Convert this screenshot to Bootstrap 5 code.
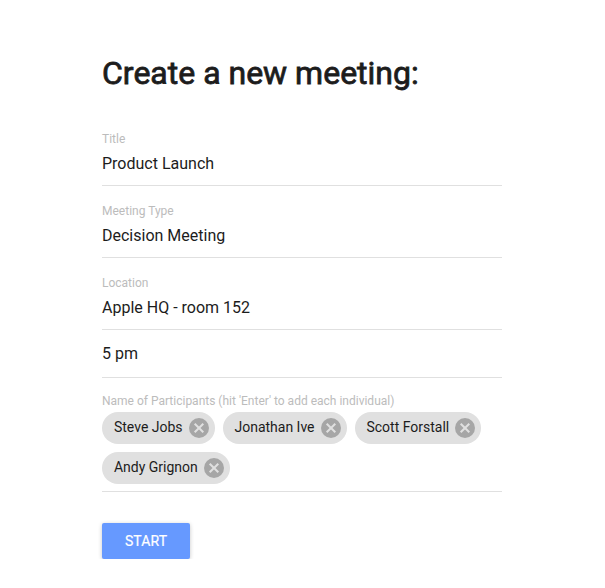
<!DOCTYPE html>
<html lang="en">
<head>
<meta charset="utf-8">
<meta name="viewport" content="width=device-width, initial-scale=1">
<title>Create a new meeting</title>
<link href="https://cdn.jsdelivr.net/npm/bootstrap@5.3.0/dist/css/bootstrap.min.css" rel="stylesheet">
<style>
body{font-family:Roboto,sans-serif;color:#1c1c1c;background:#fff}
.meeting-form{width:400px;margin-left:102px;padding-top:53px}
.page-title{font-size:32px;line-height:40px;font-weight:400;-webkit-text-stroke:.8px #1c1c1c;margin-bottom:38px;color:#1c1c1c}
.field{border-bottom:1px solid #e0e0e0;height:55px;margin-bottom:17px}
.field-time{height:48px;margin-bottom:15px}
.field-label{font-size:12px;line-height:16px;color:#bcbcbc}
.field-value{font-size:16px;line-height:24px;padding-top:5px}
.field-location{margin-bottom:0}
.field-time .field-value{padding-top:12px}
.field-chips{border-bottom:1px solid #e0e0e0;height:99px;margin-bottom:31px}
.chip-item{height:32px;border-radius:16px;background:#e0e0e0;font-size:14px;letter-spacing:-.01px;padding:0 6px 0 12px;gap:6px}
.chip-item span{line-height:30px;height:32px}
.chip-item svg{flex:none}
.chip-list{column-gap:8px;row-gap:8px;padding-top:3px}
.btn-start,.btn-start:hover{width:88px;height:36px;border-radius:2px;background:#6699ff;color:#fff;font-size:14px;font-weight:400;letter-spacing:.1px;padding:0;border:0;box-shadow:0 1px 4px rgba(0,0,0,.22);-webkit-text-stroke:.2px #fff}
</style>
</head>
<body>
<svg class="d-none"><symbol id="remove" viewBox="0 0 20 20"><circle cx="10" cy="10" r="10" fill="#a6a6a6"/><path d="M5.7 5.7l8.6 8.6M14.3 5.7l-8.6 8.6" stroke="#e0e0e0" stroke-width="2"/></symbol></svg>
<form class="meeting-form">
<h1 class="page-title text-nowrap">Create a new meeting:</h1>
<div class="field"><div class="field-label">Title</div><div class="field-value">Product Launch</div></div>
<div class="field"><div class="field-label">Meeting Type</div><div class="field-value">Decision Meeting</div></div>
<div class="field field-location"><div class="field-label">Location</div><div class="field-value">Apple HQ - room 152</div></div>
<div class="field field-time"><div class="field-value">5 pm</div></div>
<div class="field-chips"><div class="field-label">Name of Participants (hit 'Enter' to add each individual)</div>
<div class="chip-list d-flex flex-wrap">
<div class="chip-item d-flex align-items-center"><span>Steve Jobs</span><svg width="20" height="20"><use href="#remove"/></svg></div>
<div class="chip-item d-flex align-items-center"><span>Jonathan Ive</span><svg width="20" height="20"><use href="#remove"/></svg></div>
<div class="chip-item d-flex align-items-center"><span>Scott Forstall</span><svg width="20" height="20"><use href="#remove"/></svg></div>
<div class="chip-item d-flex align-items-center"><span>Andy Grignon</span><svg width="20" height="20"><use href="#remove"/></svg></div>
</div></div>
<button type="button" class="btn btn-start">START</button>
</form>
<script src="https://cdn.jsdelivr.net/npm/bootstrap@5.3.0/dist/js/bootstrap.bundle.min.js"></script>
</body>
</html>
